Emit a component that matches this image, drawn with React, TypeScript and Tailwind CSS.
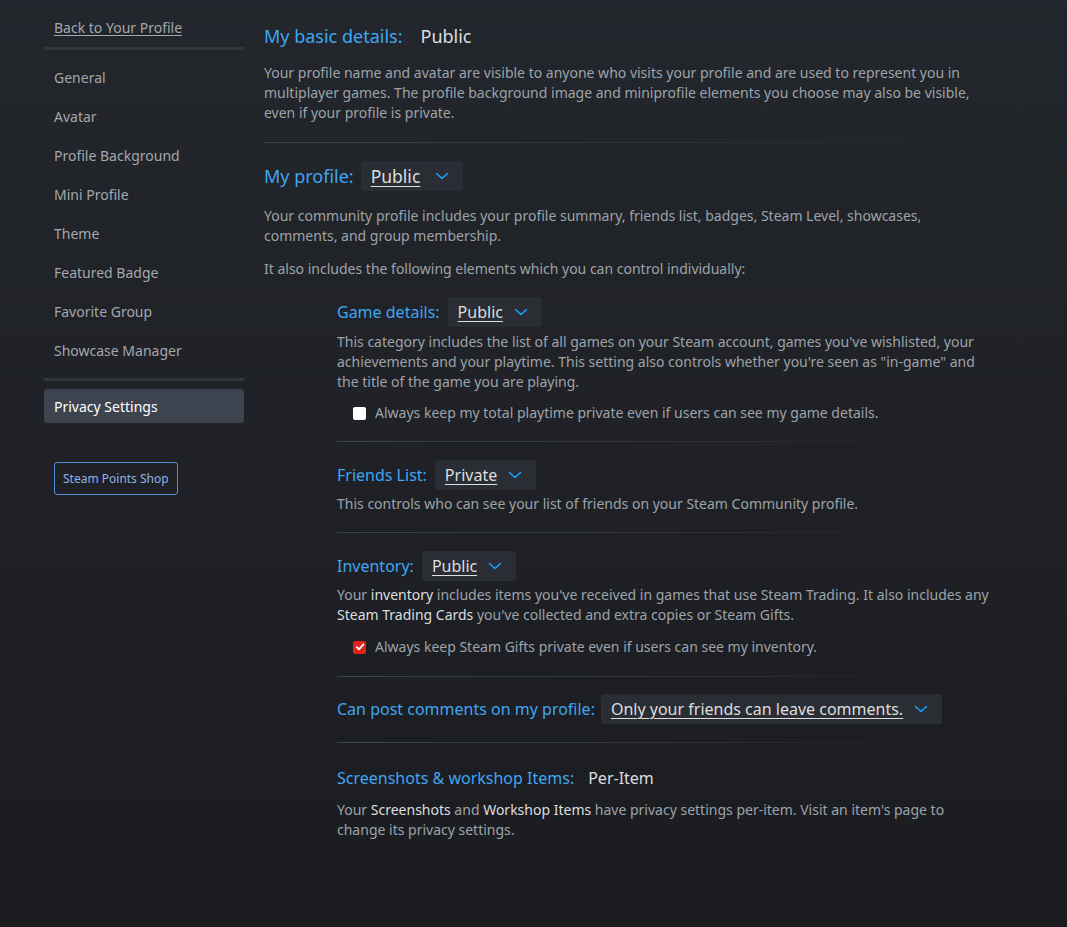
import React from "react";

const font = { fontFamily: '"Noto Sans", "Open Sans", Arial, sans-serif' };

function Chevron() {
  return (
    <svg width="14" height="14" viewBox="0 0 14 14" fill="none">
      <path d="M1.5 4.5l5.5 5 5.5-5" stroke="#1a9fff" strokeWidth="1.6" strokeLinecap="round" strokeLinejoin="round" />
    </svg>
  );
}

function Dropdown({ value, big }: { value: string; big?: boolean }) {
  return (
    <div
      className={`flex items-center h-[30px] rounded-[3px] bg-[#2a2d34] whitespace-nowrap ${
        big ? "gap-[15px] pl-[10px] pr-[14px]" : "gap-[11px] pl-[10px] pr-[14px]"
      }`}
    >
      <span
        className={`${big ? "text-[17.5px]" : "text-[16px]"} text-[#dcdedf] underline underline-offset-[3px] decoration-1`}
      >
        {value}
      </span>
      <Chevron />
    </div>
  );
}

function Divider() {
  return <div className="h-px bg-gradient-to-r from-[#3d4450] via-[#2f343c] to-transparent" />;
}

function Check({ checked }: { checked?: boolean }) {
  return checked ? (
    <span className="w-[13px] h-[13px] rounded-[2px] bg-[#e2231a] flex items-center justify-center">
      <svg width="10" height="10" viewBox="0 0 10 10" fill="none">
        <path d="M1.8 5.2l2.2 2.2 4.4-5" stroke="white" strokeWidth="1.8" strokeLinecap="round" strokeLinejoin="round" />
      </svg>
    </span>
  ) : (
    <span className="w-[13px] h-[13px] rounded-[2px] bg-white" />
  );
}

const navItems = [
  "General",
  "Avatar",
  "Profile Background",
  "Mini Profile",
  "Theme",
  "Featured Badge",
  "Favorite Group",
  "Showcase Manager",
];

function Sidebar() {
  return (
    <div className="w-[200px] ml-[44px] pt-[18px] flex flex-col shrink-0">
      <a className="px-[10px] text-[14px] text-[#a3a7ac] underline underline-offset-2 leading-[20px]">Back to Your Profile</a>
      <div className="h-[3px] bg-[#31353c] mt-[9px] mb-[8px]" />
      {navItems.map((n) => (
        <div key={n} className="px-[10px] h-[39px] flex items-center text-[14px] text-[#a3a7ac]">
          {n}
        </div>
      ))}
      <div className="h-[3px] bg-[#31353c] mt-[8px] mb-[8px]" />
      <div className="px-[10px] h-[34px] flex items-center rounded-[3px] bg-[#3d4450] text-[14px] text-white">
        Privacy Settings
      </div>
      <div className="mt-[39px] ml-[10px]">
        <span className="inline-flex items-center h-[33px] px-[8px] border border-[#4f90dd] rounded-[3px] text-[12px] text-[#8db3e8]">
          Steam Points Shop
        </span>
      </div>
    </div>
  );
}

const p = "text-[14px] leading-[20px] text-[#9da3a9]";
const h = "text-[18px] text-[#3ea6f2] whitespace-nowrap";
const h2 = "text-[16px] text-[#3ea6f2] whitespace-nowrap";
const b = "text-[#dcdedf]";

export default function App() {
  return (
    <div style={font} className="min-h-[927px] w-full bg-gradient-to-b from-[#23262c] to-[#1b1c20] flex">
      <Sidebar />
      <div className="ml-[20px] w-[732px] pt-[23px]">
        <div className="flex items-center h-[26px]">
          <span className={h}>My basic details:</span>
          <span className="ml-[18px] text-[18px] text-[#dcdedf]">Public</span>
        </div>
        <p className={`${p} mt-[14px] pr-[20px]`}>
          Your profile name and avatar are visible to anyone who visits your profile and are used to represent you in
          multiplayer games. The profile background image and miniprofile elements you choose may also be visible,
          even if your profile is private.
        </p>
        <div className="mt-[19px] mr-[20px]">
          <Divider />
        </div>

        <div className="flex items-center mt-[18px]">
          <span className={h}>My profile:</span>
          <div className="ml-[7px]">
            <Dropdown value="Public" big />
          </div>
        </div>
        <p className={`${p} mt-[15px]`}>
          Your community profile includes your profile summary, friends list, badges, Steam Level, showcases,
          comments, and group membership.
        </p>
        <p className={`${p} mt-[13px]`}>It also includes the following elements which you can control individually:</p>

        <div className="ml-[73px] mt-[18px]">
          <div className="flex items-center">
            <span className={h2}>Game details:</span>
            <div className="ml-[8px]">
              <Dropdown value="Public" />
            </div>
          </div>
          <p className={`${p} mt-[5px] pr-[10px]`}>
            This category includes the list of all games on your Steam account, games you've wishlisted, your
            achievements and your playtime. This setting also controls whether you're seen as "in-game" and the title
            of the game you are playing.
          </p>
          <div className="flex items-center mt-[11px] ml-[16px] gap-[9px]">
            <Check />
            <span className={p}>Always keep my total playtime private even if users can see my game details.</span>
          </div>
          <div className="mt-[18px] mr-[45px]">
            <Divider />
          </div>

          <div className="flex items-center mt-[18px]">
            <span className={h2}>Friends List:</span>
            <div className="ml-[8px]">
              <Dropdown value="Private" />
            </div>
          </div>
          <p className={`${p} mt-[4px]`}>This controls who can see your list of friends on your Steam Community profile.</p>
          <div className="mt-[18px] mr-[45px]">
            <Divider />
          </div>

          <div className="flex items-center mt-[18px]">
            <span className={h2}>Inventory:</span>
            <div className="ml-[8px]">
              <Dropdown value="Public" />
            </div>
          </div>
          <p className={`${p} mt-[4px]`}>
            Your <span className={b}>inventory</span> includes items you've received in games that use Steam Trading. It
            also includes any <span className={b}>Steam Trading Cards</span> you've collected and extra copies or Steam
            Gifts.
          </p>
          <div className="flex items-center mt-[12px] ml-[16px] gap-[9px]">
            <Check checked />
            <span className={p}>Always keep Steam Gifts private even if users can see my inventory.</span>
          </div>
          <div className="mt-[19px] mr-[45px]">
            <Divider />
          </div>

          <div className="flex items-center mt-[17px]">
            <span className={h2}>Can post comments on my profile:</span>
            <div className="ml-[6px]">
              <Dropdown value="Only your friends can leave comments." />
            </div>
          </div>
          <div className="mt-[18px] mr-[45px]">
            <Divider />
          </div>

          <div className="flex items-center mt-[23px] h-[24px]">
            <span className={h2}>Screenshots &amp; workshop Items:</span>
            <span className="ml-[14px] text-[16px] text-[#dcdedf]">Per-Item</span>
          </div>
          <p className={`${p} mt-[10px]`}>
            Your <span className={b}>Screenshots</span> and <span className={b}>Workshop Items</span> have privacy
            settings per-item. Visit an item's page to change its privacy settings.
          </p>
        </div>
      </div>
    </div>
  );
}
